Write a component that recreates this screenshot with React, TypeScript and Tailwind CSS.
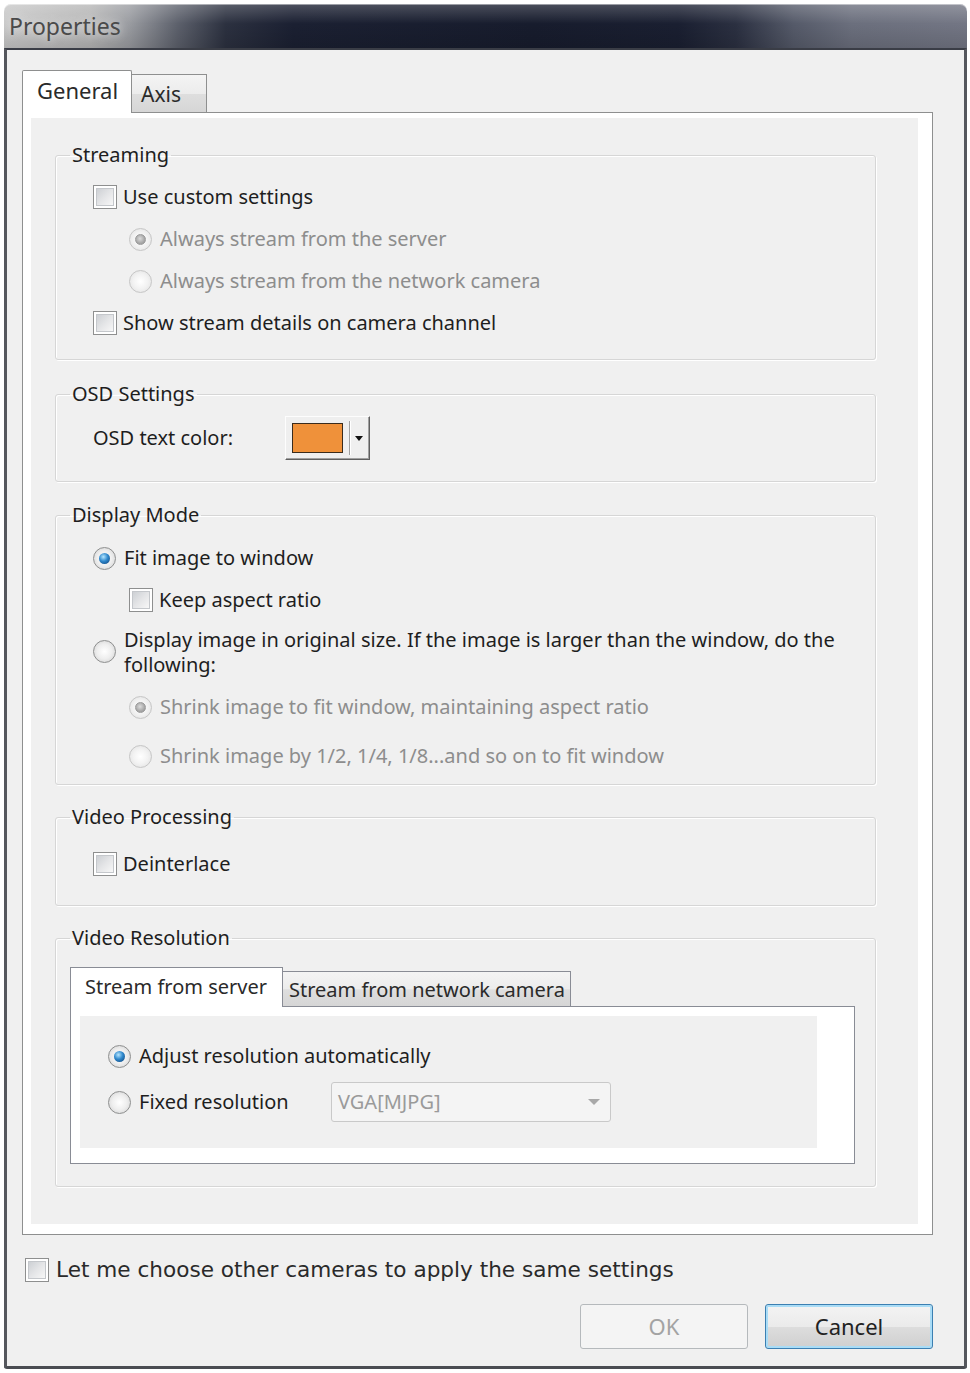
import type { ReactNode } from 'react';

function CheckBox() {
  return (
    <span className="flex h-[24px] w-[24px] shrink-0 items-center justify-center border border-[#8e8f8f] bg-white">
      <span className="h-[18px] w-[18px] border border-[#c4c7cb] bg-[linear-gradient(135deg,#cdd0d4_0%,#e4e5e7_50%,#f7f7f7_100%)]" />
    </span>
  );
}

function Radio({ checked = false, disabled = false }: { checked?: boolean; disabled?: boolean }) {
  const ring = disabled
    ? 'border-[#c6c6c6] bg-[radial-gradient(circle,#ffffff_0%,#f2f2f2_50%,#dddddd_100%)]'
    : 'border-[#8e8f8f] bg-[radial-gradient(circle,#ffffff_0%,#eeeeee_50%,#cccccc_100%)]';
  return (
    <span className={`flex h-[23px] w-[23px] shrink-0 items-center justify-center rounded-full border ${ring}`}>
      {checked && (
        <span
          className={
            disabled
              ? 'h-[11px] w-[11px] rounded-full border border-[#9a9a9a] bg-[radial-gradient(circle_at_45%_40%,#dcdcdc_0%,#a8a8a8_60%,#8e8e8e_100%)]'
              : 'h-[11px] w-[11px] rounded-full bg-[radial-gradient(circle_at_40%_35%,#b5e6ff_0%,#2f88cc_45%,#0b3c72_100%)]'
          }
        />
      )}
    </span>
  );
}

function Group({ title, children, className = '' }: { title: string; children: ReactNode; className?: string }) {
  return (
    <fieldset
      className={`rounded-[3px] border border-[#d6d6d6] shadow-[inset_1px_1px_0_#ffffff,1px_1px_0_#ffffff] ${className}`}
    >
      <legend className="ml-[14px] px-[2px] text-[20px] leading-[28px] text-[#1e1e1e]">{title}</legend>
      {children}
    </fieldset>
  );
}

export default function App() {
  const muted = 'text-[#8d8d8d]';

  return (
    <div className="h-[1373px] w-[970px] bg-white pl-[4px] pt-[4px] font-['Noto_Sans',sans-serif] text-[20px] text-[#1e1e1e]">
      <div className="flex h-[1365px] w-[963px] flex-col">
        {/* Title bar */}
        <div className="flex h-[44px] shrink-0 items-center rounded-t-[7px] bg-[linear-gradient(180deg,rgba(255,255,255,0.22)_0%,rgba(255,255,255,0)_45%,rgba(0,0,0,0.12)_100%),linear-gradient(90deg,#c8c8c8_0%,#b6b6b6_9%,#9a9ca1_13%,#5d616c_18%,#2c3140_23%,#1b2032_30%,#171c2d_55%,#1a1f31_70%,#2b3041_76%,#555a69_82%,#6b6f7d_88%,#737684_100%)] pl-[5px] shadow-[inset_0_1px_0_rgba(255,255,255,0.45)]">
          <span className="text-[23px] leading-none text-[#4a4a4a] [text-shadow:0_0_10px_#eeeeee]">Properties</span>
        </div>

        {/* Body */}
        <div className="flex flex-1 flex-col rounded-b-[3px] border-x-[3px] border-t-[2px] border-b-[3px] border-x-[#55575d] border-t-[#3a3d46] border-b-[#4a4c52] bg-[#f0f0f0] pl-[15px] pr-[31px] pt-[20px]">
          {/* Tabs */}
          <div className="flex items-end">
            <div className="relative z-10 -mb-px flex h-[43px] w-[110px] items-center rounded-t-[2px] border-x border-t border-[#8e8f8f] bg-white pb-[3px] pl-[14px] text-[22px] text-[#2a2a2a]">
              General
            </div>
            <div className="flex h-[38px] w-[75px] items-center border-r border-t border-[#8e8f8f] bg-[linear-gradient(180deg,#f4f4f4_0%,#ececec_50%,#dedede_52%,#d6d6d6_100%)] pl-[9px] pt-[2px] text-[21px] text-[#2a2a2a]">
              Axis
            </div>
          </div>

          {/* Tab page */}
          <div className="h-[1123px] border border-[#8e8f8f] bg-white pb-[10px] pl-[8px] pr-[14px] pt-[5px]">
            <div className="h-full bg-[#f0f0f0] pl-[24px] pr-[42px] pt-[23px]">
              <Group title="Streaming">
                <div className="pb-[15px] pl-[37px] pt-[7px]">
                  <div className="flex h-[42px] items-center gap-[6px]">
                    <CheckBox />
                    <span>Use custom settings</span>
                  </div>
                  <div className="flex h-[42px] items-center gap-[8px] pl-[36px]">
                    <Radio checked disabled />
                    <span className={muted}>Always stream from the server</span>
                  </div>
                  <div className="flex h-[42px] items-center gap-[8px] pl-[36px]">
                    <Radio disabled />
                    <span className={muted}>Always stream from the network camera</span>
                  </div>
                  <div className="flex h-[42px] items-center gap-[6px]">
                    <CheckBox />
                    <span>Show stream details on camera channel</span>
                  </div>
                </div>
              </Group>

              <Group title="OSD Settings" className="mt-[20px]">
                <div className="flex items-center pb-[21px] pl-[37px] pt-[8px]">
                  <span className="w-[192px]">OSD text color:</span>
                  <div className="flex h-[44px] w-[85px] items-center border border-b-[#5f5f5f] border-l-[#fdfdfd] border-r-[#5f5f5f] border-t-[#fdfdfd] bg-[#efefef] shadow-[inset_-1px_-1px_0_#a0a0a0]">
                    <span className="ml-[6px] h-[30px] w-[51px] border border-[#3a2b1c] bg-[#ef913a]" />
                    <span className="ml-[6px] h-[34px] w-px bg-[#a0a0a0] shadow-[1px_0_0_#ffffff]" />
                    <svg viewBox="0 0 8 5" className="ml-[5px] h-[5px] w-[8px]" aria-hidden="true">
                      <path d="M0 0h8L4 5z" fill="#111111" />
                    </svg>
                  </div>
                </div>
              </Group>

              <Group title="Display Mode" className="mt-[19px]">
                <div className="pb-[9px] pl-[37px] pt-[8px]">
                  <div className="flex h-[42px] items-center gap-[8px]">
                    <Radio checked />
                    <span>Fit image to window</span>
                  </div>
                  <div className="flex h-[41px] items-center gap-[6px] pl-[36px]">
                    <CheckBox />
                    <span>Keep aspect ratio</span>
                  </div>
                  <div className="flex h-[57px] items-center gap-[8px] pt-[6px]">
                    <Radio />
                    <span className="whitespace-nowrap leading-[25px]">
                      Display image in original size. If the image is larger than the window, do the
                      <br />
                      following:
                    </span>
                  </div>
                  <div className="flex h-[60px] items-center gap-[8px] pl-[36px]">
                    <Radio checked disabled />
                    <span className={muted}>Shrink image to fit window, maintaining aspect ratio</span>
                  </div>
                  <div className="flex h-[38px] items-center gap-[8px] pl-[36px]">
                    <Radio disabled />
                    <span className={muted}>Shrink image by 1/2, 1/4, 1/8...and so on to fit window</span>
                  </div>
                </div>
              </Group>

              <Group title="Video Processing" className="mt-[18px]">
                <div className="pb-[20px] pl-[37px] pt-[12px]">
                  <div className="flex h-[42px] items-center gap-[6px]">
                    <CheckBox />
                    <span>Deinterlace</span>
                  </div>
                </div>
              </Group>

              <Group title="Video Resolution" className="mt-[18px]">
                <div className="pb-[22px] pl-[14px] pr-[20px] pt-[15px]">
                  <div className="flex items-end">
                    <div className="relative z-10 -mb-px flex h-[40px] w-[213px] items-center border-x border-t border-[#898c95] bg-white pb-[2px] pl-[14px] text-[#2a2a2a]">
                      Stream from server
                    </div>
                    <div className="flex h-[35px] w-[288px] items-center border-r border-t border-[#898c95] bg-[linear-gradient(180deg,#f4f4f4_0%,#ececec_50%,#dedede_52%,#d6d6d6_100%)] pl-[6px] pt-[2px] text-[#2a2a2a]">
                      Stream from network camera
                    </div>
                  </div>
                  <div className="h-[158px] border border-[#898c95] bg-white pb-[15px] pl-[9px] pr-[37px] pt-[9px]">
                    <div className="h-full bg-[#f0f0f0] pl-[28px] pt-[20px]">
                      <div className="flex h-[40px] items-center gap-[8px]">
                        <Radio checked />
                        <span>Adjust resolution automatically</span>
                      </div>
                      <div className="mt-[6px] flex h-[40px] items-center">
                        <div className="flex w-[223px] items-center gap-[8px]">
                          <Radio />
                          <span>Fixed resolution</span>
                        </div>
                        <div className="flex h-[40px] w-[280px] items-center justify-between rounded-[3px] border border-[#c9c9c9] bg-[#f4f4f4] pl-[6px] pr-[10px]">
                          <span className="text-[#9a9a9a]">VGA[MJPG]</span>
                          <svg viewBox="0 0 12 6" className="h-[6px] w-[12px]" aria-hidden="true">
                            <path d="M0 0h12L6 6z" fill="#a8a8a8" />
                          </svg>
                        </div>
                      </div>
                    </div>
                  </div>
                </div>
              </Group>
            </div>
          </div>

          {/* Apply to other cameras */}
          <div className="mt-[15px] flex h-[40px] items-center gap-[7px] pl-[3px]">
            <CheckBox />
            <span className="font-['DejaVu_Sans',sans-serif] text-[21.6px] text-[#2a2a2a]">
              Let me choose other cameras to apply the same settings
            </span>
          </div>

          {/* Buttons */}
          <div className="mt-[14px] flex justify-end gap-[17px]">
            <button
              type="button"
              disabled
              className="h-[45px] w-[168px] rounded-[3px] border border-[#b5b9bc] bg-[#f4f4f4] text-[22px] text-[#a3a3a3]"
            >
              OK
            </button>
            <button
              type="button"
              className="h-[45px] w-[168px] rounded-[3px] border border-[#3c7fb1] bg-[linear-gradient(180deg,#f3f3f3_0%,#ebebeb_50%,#dddddd_51%,#cfcfcf_100%)] text-[22px] text-[#222222] shadow-[inset_0_0_0_2px_#a9dcf6]"
            >
              Cancel
            </button>
          </div>
        </div>
      </div>
    </div>
  );
}
